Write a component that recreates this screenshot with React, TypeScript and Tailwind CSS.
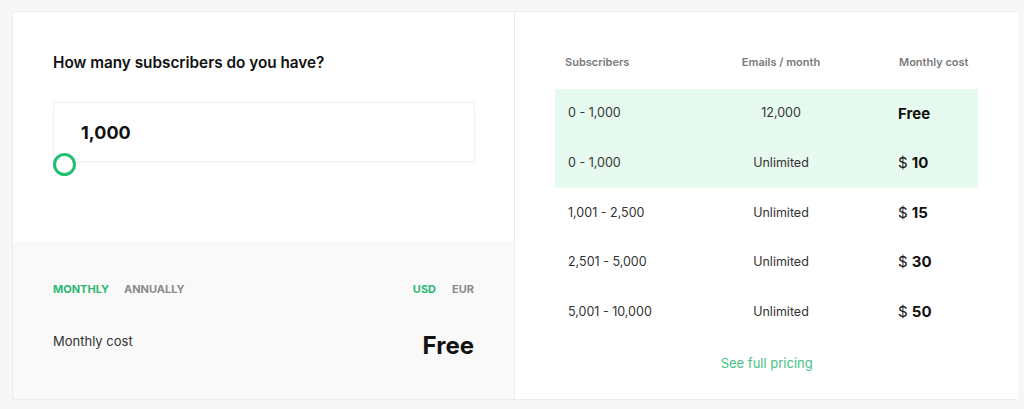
import React from "react";

const rows = [
  { subs: "0 - 1,000", emails: "12,000", cost: "Free", active: true },
  { subs: "0 - 1,000", emails: "Unlimited", cost: "10", active: true },
  { subs: "1,001 - 2,500", emails: "Unlimited", cost: "15", active: false },
  { subs: "2,501 - 5,000", emails: "Unlimited", cost: "30", active: false },
  { subs: "5,001 - 10,000", emails: "Unlimited", cost: "50", active: false },
];

function Calculator() {
  return (
    <div className="flex w-[502px] flex-col border-r border-[#ececec]">
      <div className="h-[230px] bg-white px-[40px] pt-[40px]">
        <h2 className="text-[15.3px] leading-[22px] font-semibold text-[#111]">
          How many subscribers do you have?
        </h2>
        <div className="relative mt-[28px] w-[422px]">
          <div className="flex h-[60px] items-center border border-[#f0f0f0] bg-white pl-[27px] shadow-[0_2px_3px_rgba(0,0,0,0.03)]">
            <span className="text-[18px] font-bold text-[#111]">1,000</span>
          </div>
          <div className="absolute top-[51px] left-0 size-[23px] rounded-full border-[3px] border-[#22bf73] bg-white" />
        </div>
      </div>
      <div className="flex-1 bg-[#f9f9f9] px-[40px] pt-[40px]">
        <div className="flex items-center justify-between text-[11px] leading-[14px] font-bold uppercase">
          <div className="flex gap-[15px]">
            <span className="text-[#2db872]">Monthly</span>
            <span className="text-[#8a8a8a]">Annually</span>
          </div>
          <div className="flex gap-[16px]">
            <span className="text-[#2db872]">USD</span>
            <span className="text-[#8a8a8a]">EUR</span>
          </div>
        </div>
        <div className="mt-[32px] flex items-start justify-between">
          <span className="mt-[3px] text-[13px] leading-[20px] text-[#333]">Monthly cost</span>
          <span className="text-[24px] leading-[36px] font-bold text-[#111]">Free</span>
        </div>
      </div>
    </div>
  );
}

function PriceTable() {
  return (
    <div className="flex flex-1 flex-col bg-white px-[40px] pt-[40px]">
      <div className="grid h-[37px] grid-cols-[116px_200px_1fr] px-[10px] text-[11px] leading-[20px] font-semibold whitespace-nowrap text-[#7a7a7a]">
        <span>Subscribers</span>
        <span className="text-center">Emails / month</span>
        <span className="pl-[18px]">Monthly cost</span>
      </div>
      <div className="flex flex-col">
        {rows.map((r, i) => (
          <div
            key={i}
            className={`grid h-[49.6px] grid-cols-[113px_200px_1fr] items-center px-[13px] text-[12.5px] text-[#333] ${
              r.active ? "bg-[#e6faef]" : ""
            }`}
          >
            <span>{r.subs}</span>
            <span className="text-center">{r.emails}</span>
            <span className="pl-[17px] text-[15px] text-[#111]">
              {r.cost === "Free" ? (
                <b className="font-bold">Free</b>
              ) : (
                <>
                  <span className="font-normal">$ </span>
                  <b className="font-bold">{r.cost}</b>
                </>
              )}
            </span>
          </div>
        ))}
      </div>
      <a className="mt-[16px] text-center text-[13px] leading-[20px] text-[#45c283]" href="#">
        See full pricing
      </a>
    </div>
  );
}

export default function App() {
  return (
    <div
      className="h-[409px] w-[1024px] bg-[#f7f7f7] pt-[11px] pl-[12px]"
      style={{ fontFamily: "Inter, 'Noto Sans', sans-serif" }}
    >
      <div className="flex h-[389px] w-[1004px] border border-[#ececec] bg-white">
        <Calculator />
        <PriceTable />
      </div>
    </div>
  );
}
